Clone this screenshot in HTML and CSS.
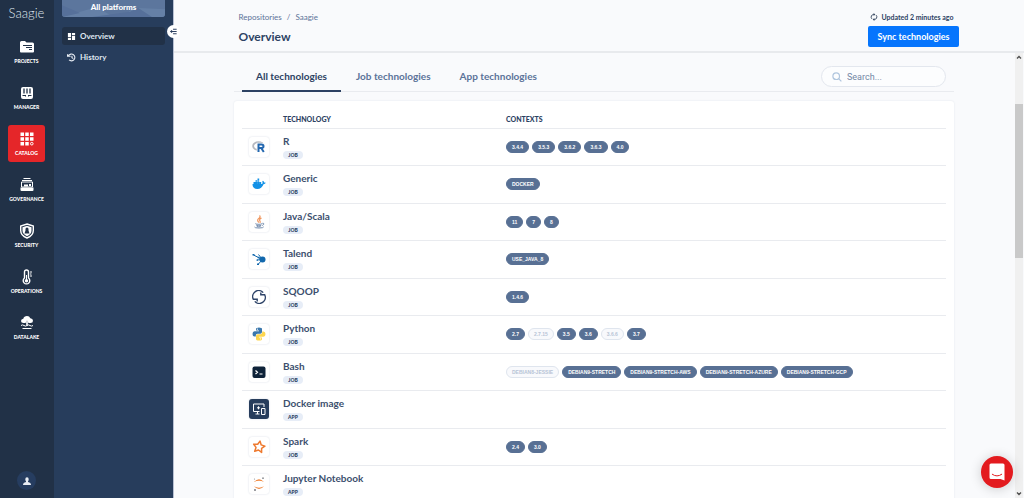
FILE: index.html
```html
<!DOCTYPE html>
<html lang="en">
<head>
<meta charset="utf-8">
<meta name="viewport" content="width=device-width, initial-scale=1">
<title>Saagie - Technologies overview</title>
<link rel="stylesheet" href="styles.css">
</head>
<body>
<div class="app">
  <nav class="rail" aria-label="Modules">
    <a class="brand" href="#">Saagie</a>
    <a class="module" href="#"><svg viewBox="0 0 16 16"><path fill="#fff" d="M1 3.500q0-1.500 1.500-1.500h3.500l1.500 1.500h6q1.500 0 1.500 1.500v7.500q0 1-1 1H2q-1 0-1-1z"/><path stroke="#213147" stroke-width="1" d="M4 6.500h9M7 8.500h6M10 10.500h3"/></svg><span>PROJECTS</span></a>
    <a class="module" href="#"><svg viewBox="0 0 16 16"><rect x="2" y="2" width="12" height="12" rx="2" fill="#fff"/><path stroke="#213147" stroke-width="1.300" d="M5 3.500v5M8 3.500v5M11 3.500v5"/><path stroke="#213147" d="M3.500 10.500h3M9.500 10.500h3M6.500 10v1.500M9.500 10v1.500"/></svg><span>MANAGER</span></a>
    <a class="module module-active" href="#" aria-current="page"><svg viewBox="0 0 16 16"><path fill="#fff" d="M1.500 1.500h3.500v3.500h-3.500zM6.250 1.500h3.500v3.500h-3.500zM11 1.500h3.500v3.500h-3.500zM1.500 6.250h3.500v3.500h-3.500zM6.250 6.250h3.500v3.500h-3.500zM11 6.250h3.500v3.500h-3.500zM1.500 11h3.500v3.500h-3.500zM6.250 11h3.500v3.500h-3.500z"/><circle cx="12.800" cy="12.700" r="1.300" fill="none" stroke="#fff" stroke-width="1"/></svg><span>CATALOG</span></a>
    <a class="module" href="#"><svg viewBox="0 0 16 16"><path stroke="#fff" fill="none" d="M4.500 1.500h7M3 3.500h10M2.500 5h11v5h-11z"/><path fill="#fff" d="M1.500 10.500h13v2.500q0 1-1 1h-11q-1 0-1-1z"/><path stroke="#fff" stroke-width="2" d="M5 8.500h4M10 8h2"/></svg><span>GOVERNANCE</span></a>
    <a class="module" href="#"><svg viewBox="0 0 16 16"><path fill="#213147" stroke="#fff" stroke-width="1.400" d="M8 1l6.300 2v4.500q0 5-6.300 7.500-6.300-2.500-6.300-7.500V3z"/><path fill="#fff" d="M8 2.800l4.500 1.500v3.500q0 3.500-4.500 5.400-4.500-1.900-4.500-5.400V4.300z"/><path fill="#213147" d="M6.500 6q0-1.600 1.500-1.600T9.500 6v1.500L10.500 10.500h-5l1-3z"/></svg><span>SECURITY</span></a>
    <a class="module" href="#"><svg viewBox="0 0 16 16"><path fill="none" stroke="#fff" stroke-width="1.400" d="M5.500 9V3q0-2 2-2t2 2v6a3.300 3.300 0 1 1-4 0z"/><circle cx="7.500" cy="11.700" r="1.700" fill="#fff"/><path stroke="#fff" d="M7.500 6v5M11 3h2M11 5h1.500M11 7h2"/></svg><span>OPERATIONS</span></a>
    <a class="module" href="#"><svg viewBox="0 0 16 16"><path fill="#fff" d="M4.500 8Q2 8 2 6t2.300-2.200Q5 1 8 1q2.500 0 3.300 2.300Q14 3.500 14 5.700T11.500 8h-2L8 5.500 6.500 8zM7.200 6.500h1.600v4H7.200z"/><path fill="none" stroke="#fff" d="M2 10.500q1.500-1.200 3 0t3 0 3 0 3 0M3.500 13.500h9"/></svg><span>DATALAKE</span></a>
    <button class="account" type="button" aria-label="Account"><svg viewBox="0 0 10 10"><path fill="#e8edf4" d="M3.300 3.200q0-2 1.700-2t1.700 2q0 1.300-.7 2v.7q3 .6 3 3.100H1q0-2.500 3-3.100v-.7q-.7-.7-.7-2z"/></svg></button>
  </nav>

  <aside class="side">
    <button class="platform" type="button"><svg class="facets" viewBox="0 0 103 26" preserveAspectRatio="none" aria-hidden="true"><path fill="#6580a6" d="M0 26l34-15 18 15zM72 12l31 2v12H60z"/><path fill="#56709a" d="M30 26l38-8 8-6 14 14zM0 8l18 12L0 26z"/></svg><span>All platforms</span></button>
    <a class="side-link side-link-active" href="#" aria-current="page"><svg viewBox="0 0 10 10"><path fill="#fff" d="M1 1h3.500v4.500H1zM5.500 1H9v2.500H5.500zM1 6.500h3.500V9H1zM5.500 4.500H9V9H5.500z"/></svg>Overview</a>
    <a class="side-link" href="#"><svg viewBox="0 0 10 10" fill="none" stroke="#e9eef5" stroke-width="1.200"><path d="M1.700 3A3.800 3.800 0 1 1 2.300 7.700M5.500 3v2.300l1.500 1"/><path fill="#e9eef5" stroke="none" d="M0 1.500h1.200L2.500 3h1.500v1.300H0z"/></svg>History</a>
    <button class="collapse" type="button" aria-label="Collapse menu"><svg viewBox="0 0 10 10"><path stroke="#2a3f5f" stroke-width="1.100" d="M4.500 2.500h4M2 5h6.500M4.500 7.500h4"/><path fill="#2a3f5f" d="M3.500 3v4L1 5z"/></svg></button>
  </aside>

  <main class="main">
    <header class="top">
      <div class="wrap top-inner">
        <div>
          <div class="crumbs"><a href="#">Repositories</a><span>/</span><a href="#">Saagie</a></div>
          <h1 class="title">Overview</h1>
        </div>
        <div class="sync">
          <p class="updated"><svg viewBox="0 0 10 10"><path fill="none" stroke="#3a4a62" stroke-width="1.200" d="M2.300 7.300A3.300 3.300 0 0 1 4.800 1.800M7.700 2.700A3.300 3.300 0 0 1 5.200 8.200"/><path fill="#3a4a62" d="M4.500 0l2.200 1.800-2.200 1.900zM5.500 6.300v3.700L3.300 8.200z"/></svg>Updated 2 minutes ago</p>
          <button class="sync-btn" type="button">Sync technologies</button>
        </div>
      </div>
    </header>

    <div class="body">
      <div class="scroller">
        <div class="wrap">
          <div class="toolbar">
            <div class="tabs" role="tablist">
              <button class="tab tab-active" type="button" role="tab" aria-selected="true">All technologies</button>
              <button class="tab" type="button" role="tab" aria-selected="false">Job technologies</button>
              <button class="tab" type="button" role="tab" aria-selected="false">App technologies</button>
            </div>
            <label class="search"><svg viewBox="0 0 10 10" fill="none" stroke="#b0c6de" stroke-width="1.200"><circle cx="4.200" cy="4.200" r="3.300"/><path d="M6.600 6.600L9.400 9.400"/></svg><input type="search" placeholder="Search..." aria-label="Search technologies"></label>
          </div>

          <div class="card">
            <table class="techs">
              <thead><tr><th class="col-icon"></th><th class="col-tech" scope="col">TECHNOLOGY</th><th scope="col">CONTEXTS</th></tr></thead>
              <tbody>
                <tr>
                  <td><span class="logo"><svg viewBox="0 0 14 14"><ellipse cx="6.500" cy="6" rx="5.400" ry="3.800" fill="none" stroke="#b5b8bf" stroke-width="1.800"/><path fill="none" stroke="#fff" stroke-width="3.500" d="M6.500 12V4.500h3q2 0 2 1.700T9.500 8h-3M9 8l2.500 4"/><path fill="none" stroke="#2468b0" stroke-width="2" d="M6.500 12V4.500h3q2 0 2 1.700T9.500 8h-3M9.200 8l2.600 4"/></svg></span></td>
                  <td><div class="name">R</div><span class="kind">JOB</span></td>
                  <td><div class="tags"><span class="tag">3.4.4</span><span class="tag">3.5.3</span><span class="tag">3.6.2</span><span class="tag">3.6.3</span><span class="tag">4.0</span></div></td>
                </tr>
                <tr>
                  <td><span class="logo"><svg viewBox="0 0 14 14"><path fill="#1391e6" d="M.5 7h9.700q.6-1.300.1-2.700l.7-.6q1 .8 1.200 1.800 1-.1 1.600.3-.5 1.300-2.300 1.500Q9.800 12 5.300 12 .5 12 .5 7zM1.500 5h1.900v2H1.500zM3.400 5h1.900v2H3.400zM5.400 5h1.900v2H5.400zM7.400 5h1.800v2H7.400zM3.500 3.200h1.700v1.600H3.500zM5.500 3.200h1.700v1.600H5.500zM5.500 1.400h1.700v1.500H5.500z"/></svg></span></td>
                  <td><div class="name">Generic</div><span class="kind">JOB</span></td>
                  <td><div class="tags"><span class="tag">DOCKER</span></div></td>
                </tr>
                <tr>
                  <td><span class="logo"><svg viewBox="0 0 14 14" fill="none"><path stroke="#f0975f" stroke-width="1.200" d="M7.500.5Q9 2 6.800 3.500 4.500 5 6.800 7.500M9.500 3Q6.500 4.500 8 6q.7 1-.3 1.800"/><path stroke="#7890b0" d="M3.500 8.500q-1 .8 3.500.8 2 0 3-.6M4.300 10.300q2.700 1 5 0M10.300 8.300q2-.3 1.400 1-.4.800-1.500 1.200M2.500 12q0 1 4.500 1t4.700-1.200M4.800 11.500q2 .7 3.800 0"/></svg></span></td>
                  <td><div class="name">Java/Scala</div><span class="kind">JOB</span></td>
                  <td><div class="tags"><span class="tag">11</span><span class="tag">7</span><span class="tag">8</span></div></td>
                </tr>
                <tr>
                  <td><span class="logo"><svg viewBox="0 0 14 14"><circle cx="10.500" cy="7.500" r="3" fill="#1268ad"/><path stroke="#1268ad" fill="none" d="M10.500 7.500L1.500 3M10 7L6.500 2.500M10 8l-4 4.500M10 7.500L5 8M10 7l-4-1.500"/><path fill="#1268ad" d="M.5 2h2v1.500h-2zM5 11.500h2V13H5zM5.700 4.700h1.500v1.500H5.700zM4.500 7.500H6v1.300H4.500z"/></svg></span></td>
                  <td><div class="name">Talend</div><span class="kind">JOB</span></td>
                  <td><div class="tags"><span class="tag">USE_JAVA_8</span></div></td>
                </tr>
                <tr>
                  <td><span class="logo"><svg viewBox="0 0 14 14" fill="none" stroke="#2d4368" stroke-width="1.400"><path d="M11.200 2.600A6 6 0 0 0 1.300 9.200H5.200V11.500M2.800 11.400A6 6 0 0 0 12.700 4.800H8.800V2.500"/></svg></span></td>
                  <td><div class="name">SQOOP</div><span class="kind">JOB</span></td>
                  <td><div class="tags"><span class="tag">1.4.6</span></div></td>
                </tr>
                <tr>
                  <td><span class="logo"><svg viewBox="0 0 14 14"><path fill="#3b78ad" d="M4 2q0-1.500 3-1.500t3 1.500v3q0 1.700-1.700 1.700H5.500Q3.800 6.700 3.800 8.500v1H2.500Q.5 9.500.5 7t2-2.800H7v-.6H4z"/><path fill="#fdd64f" d="M10 12q0 1.500-3 1.500T4 12V9q0-1.700 1.700-1.700h2.800q1.700 0 1.700-1.800v-1h1.300q2 0 2 2.500t-2 2.800H7v.6h3z"/><circle cx="5.400" cy="2.200" r=".6" fill="#fff"/><circle cx="8.600" cy="11.800" r=".6" fill="#fff"/></svg></span></td>
                  <td><div class="name">Python</div><span class="kind">JOB</span></td>
                  <td><div class="tags"><span class="tag">2.7</span><span class="tag tag-off">2.7.15</span><span class="tag">3.5</span><span class="tag">3.6</span><span class="tag tag-off">3.6.6</span><span class="tag">3.7</span></div></td>
                </tr>
                <tr>
                  <td><span class="logo"><svg viewBox="0 0 14 14"><rect x=".5" y="1.500" width="13" height="11.500" rx="2" fill="#0e2239"/><path fill="none" stroke="#fff" stroke-width="1.200" d="M3.500 5.500L5.500 7.300 3.500 9M7.500 9h3"/></svg></span></td>
                  <td><div class="name">Bash</div><span class="kind">JOB</span></td>
                  <td><div class="tags"><span class="tag tag-off">DEBIAN8-JESSIE</span><span class="tag">DEBIAN9-STRETCH</span><span class="tag">DEBIAN9-STRETCH-AWS</span><span class="tag">DEBIAN9-STRETCH-AZURE</span><span class="tag">DEBIAN9-STRETCH-GCP</span></div></td>
                </tr>
                <tr>
                  <td><span class="logo logo-dark"><svg viewBox="0 0 14 14" fill="none" stroke="#fff"><path d="M7.500 9.500H1.500v-7.500h10.500v3M3.500 12h4M5.500 9.500V12"/><path d="M9.500 6.500h3.500v6H9.500z"/><path d="M5 5.800h3M6.500 4.300v3"/></svg></span></td>
                  <td><div class="name">Docker image</div><span class="kind">APP</span></td>
                  <td></td>
                </tr>
                <tr>
                  <td><span class="logo"><svg viewBox="0 0 14 14"><path fill="none" stroke="#ee7a30" stroke-width="1.500" stroke-linejoin="round" d="M8 1.100L9.200 4.900l3.700 1.300-3.300 2.200v4L6.500 10l-3.800 1.200L4 7.400 1.700 4.200l4 .1z"/></svg></span></td>
                  <td><div class="name">Spark</div><span class="kind">JOB</span></td>
                  <td><div class="tags"><span class="tag">2.4</span><span class="tag">3.0</span></div></td>
                </tr>
                <tr>
                  <td><span class="logo"><svg viewBox="0 0 14 14"><path fill="#f08438" d="M2 5q5-5.500 10 0-5-2.700-10 0zM2 9.300q5 5.500 10 0-5 2.700-10 0z"/><circle cx="11" cy="1.200" r=".9" fill="#8b8d92"/><circle cx="2.500" cy="2" r=".6" fill="#8b8d92"/><circle cx="3" cy="13" r="1" fill="#7b7d82"/></svg></span></td>
                  <td><div class="name">Jupyter Notebook</div><span class="kind">APP</span></td>
                  <td></td>
                </tr>
              </tbody>
            </table>
          </div>
        </div>
      </div>
      <div class="bar" aria-hidden="true">
        <svg viewBox="0 0 8 8"><path fill="none" stroke="#505050" stroke-width="1.400" d="M2 5.500l2-2 2 2"/></svg>
        <div class="track"><div class="thumb"></div></div>
        <svg viewBox="0 0 8 8"><path fill="none" stroke="#505050" stroke-width="1.400" d="M2 2.500l2 2 2-2"/></svg>
      </div>
    </div>
    <button class="chat" type="button" aria-label="Open chat"><svg viewBox="0 0 16 18"><path fill="#fff" d="M2 .5h12q1.500 0 1.500 1.500v15.500L11.500 16H2Q.5 16 .5 14.500V2Q.5.500 2 .5z"/><path fill="none" stroke="#e31b1f" stroke-linecap="round" d="M3.300 11.300q4.700 3.400 9.400 0"/></svg></button>
  </main>
</div>
</body>
</html>
```

FILE: styles.css
```css
* { box-sizing: border-box; }

body {
  margin: 0;
  font-family: Lato, "Open Sans", sans-serif;
  font-size: 10px;
  color: #2d4263;
}

button, input { font: inherit; color: inherit; border: 0; padding: 0; margin: 0; background: none; }
a { color: inherit; text-decoration: none; }
h1, p { margin: 0; }
svg { display: block; flex: none; }

.app {
  display: grid;
  grid-template-columns: 54px 119px minmax(0, 1fr);
  height: 100vh;
  overflow: hidden;
}

/* Module rail */
.rail {
  display: flex;
  flex-direction: column;
  align-items: center;
  gap: 9px;
  padding: 0 1px 8px 0;
  background: #213147;
  color: #fff;
}
.brand {
  height: 24px;
  padding-top: 4px;
  font-size: 13px;
  line-height: 18px;
  font-weight: 300;
  color: #dfe5ee;
}
.module {
  display: flex;
  flex-direction: column;
  align-items: center;
  gap: 3px;
  width: 37px;
  height: 37px;
  padding-top: 6px;
  border-radius: 3px;
  font-size: 5px;
  line-height: 6px;
  font-weight: 900;
}
.module svg { width: 16px; height: 16px; }
.module-active { background: #e52629; }
.account {
  display: grid;
  place-items: center;
  width: 19px;
  height: 19px;
  margin-top: auto;
  border-radius: 50%;
  background: #263d60;
}
.account svg { width: 10px; height: 10px; }

/* Section menu */
.side {
  position: relative;
  z-index: 1;
  display: flex;
  flex-direction: column;
  gap: 3px;
  padding: 0 8px;
  background: #273d5c;
  box-shadow: 1px 0 0 #b9c1d3;
  color: #fff;
}
.platform {
  display: grid;
  height: 17px;
  margin-bottom: 7px;
  overflow: hidden;
  border-radius: 0 0 3px 3px;
  background: #5c769d;
  font-size: 8px;
  line-height: 15px;
  font-weight: 900;
}
.platform > * { grid-area: 1 / 1; }
.facets { width: 100%; height: 17px; }
.platform span { z-index: 1; }
.side-link {
  display: flex;
  align-items: center;
  gap: 4px;
  height: 18px;
  padding: 0 5px;
  border-radius: 3px;
  font-size: 8px;
  font-weight: 700;
  color: #dfe6f0;
}
.side-link svg { width: 9px; height: 9px; }
.side-link-active { background: #213147; }
.collapse {
  position: absolute;
  z-index: 2;
  top: 25px;
  right: -7px;
  display: grid;
  place-items: center;
  width: 13px;
  height: 13px;
  border-radius: 50%;
  background: #fff;
}
.collapse svg { width: 9px; height: 9px; }

/* Page */
.main {
  position: relative;
  display: flex;
  flex-direction: column;
  min-height: 0;
  background: #f9fafc;
}
.wrap { width: 100%; max-width: 720px; margin: 0 auto; }
.top { flex: none; border-bottom: 2px solid #e8eaed; }
.top-inner {
  display: flex;
  justify-content: space-between;
  padding: 11px 0 4px;
}
.crumbs {
  display: flex;
  gap: 5px;
  font-size: 8px;
  line-height: 12px;
  color: #5b7399;
}
.title {
  margin-top: 6px;
  font-size: 12px;
  line-height: 16px;
  font-weight: 700;
}
.sync { display: flex; flex-direction: column; align-items: flex-end; gap: 3px; }
.updated {
  display: flex;
  align-items: center;
  gap: 3px;
  padding-right: 5px;
  font-size: 7px;
  line-height: 12px;
  font-weight: 700;
}
.updated svg { width: 8px; height: 8px; }
.sync-btn {
  height: 21px;
  padding: 0 9px;
  border-radius: 2px;
  background: #0675fd;
  color: #fff;
  font-size: 9px;
  font-weight: 700;
}

.body { display: flex; flex: 1; min-height: 0; }
.scroller { flex: 1; min-width: 0; overflow-y: auto; scrollbar-width: none; }

.toolbar {
  display: flex;
  justify-content: space-between;
  height: 39px;
  padding: 0 8px;
  border-bottom: 1px solid #e9ebef;
}
.tabs { display: flex; gap: 1px; height: 39px; }
.tab {
  padding: 9px 14px 0;
  border-bottom: 2px solid transparent;
  font-size: 10px;
  line-height: 12px;
  font-weight: 700;
  color: #5b7399;
}
.tab-active { border-color: #2d4263; color: #2d4263; }
.search {
  display: flex;
  align-items: center;
  gap: 5px;
  width: 125px;
  height: 21px;
  margin-top: 13px;
  padding: 0 10px;
  border: 1px solid #e3e7ee;
  border-radius: 11px;
  background: #fcfdfe;
}
.search svg { width: 10px; height: 10px; }
.search input {
  width: 100%;
  min-width: 0;
  outline: 0;
  font-family: Roboto, sans-serif;
  font-size: 9px;
}
.search input::placeholder { color: #7487a5; opacity: 1; }

.card {
  margin-top: 9px;
  padding: 8px 8px 0;
  border-radius: 3px;
  background: #fff;
  box-shadow: 0 0 2px #dfe3ea;
}
.techs { width: 100%; border-collapse: collapse; table-layout: fixed; }
.techs th {
  height: 19px;
  padding: 1px 0 0;
  border-bottom: 1px solid #e9ebef;
  text-align: left;
  font-size: 7px;
  line-height: 8px;
  font-weight: 900;
}
.col-icon { width: 41px; }
.col-tech { width: 223px; }
.techs td {
  height: 37px;
  padding: 0;
  border-bottom: 1px solid #e9ebef;
  vertical-align: middle;
}
.techs tr:nth-child(even) td { height: 38px; }
.logo {
  display: grid;
  place-items: center;
  width: 20px;
  height: 20px;
  margin-left: 7px;
  border-radius: 3px;
  background: #fff;
  box-shadow: 0 0 2px #d5dae3;
}
.logo svg { width: 14px; height: 14px; }
.logo-dark { background: #273d5c; }
.name { font-size: 10px; line-height: 14px; font-weight: 700; color: #3c4f6e; }
.kind {
  display: block;
  width: 20px;
  margin: 3px 0 1px;
  border-radius: 4px;
  background: #e7edf7;
  font-size: 5px;
  line-height: 8px;
  font-weight: 900;
  text-align: center;
}
.tags { display: flex; flex-wrap: wrap; gap: 3px; }
.tag {
  padding: 0 5px;
  border: 1px solid #587094;
  border-radius: 6px;
  background: #587094;
  color: #fff;
  font-family: "Liberation Sans", sans-serif;
  font-size: 5px;
  line-height: 10px;
  font-weight: 700;
}
.tag-off { border-color: #dfe5ee; background: #f8f9fc; color: #b7c4d6; }

/* Scroll indicator */
.bar {
  display: flex;
  flex-direction: column;
  flex: none;
  width: 8px;
  margin-right: 1px;
  background: #f0f0f0;
}
.bar svg { width: 8px; height: 8px; }
.track { display: grid; grid-template-rows: 10fr 36fr 54fr; flex: 1; }
.thumb { grid-row: 2; background: #c9c9c9; }

.chat {
  position: absolute;
  right: 11px;
  bottom: 10px;
  display: grid;
  place-items: center;
  width: 32px;
  height: 32px;
  border-radius: 50%;
  background: #e31b1f;
  box-shadow: 0 1px 12px #00000030;
}
.chat svg { width: 16px; height: 18px; }
```
